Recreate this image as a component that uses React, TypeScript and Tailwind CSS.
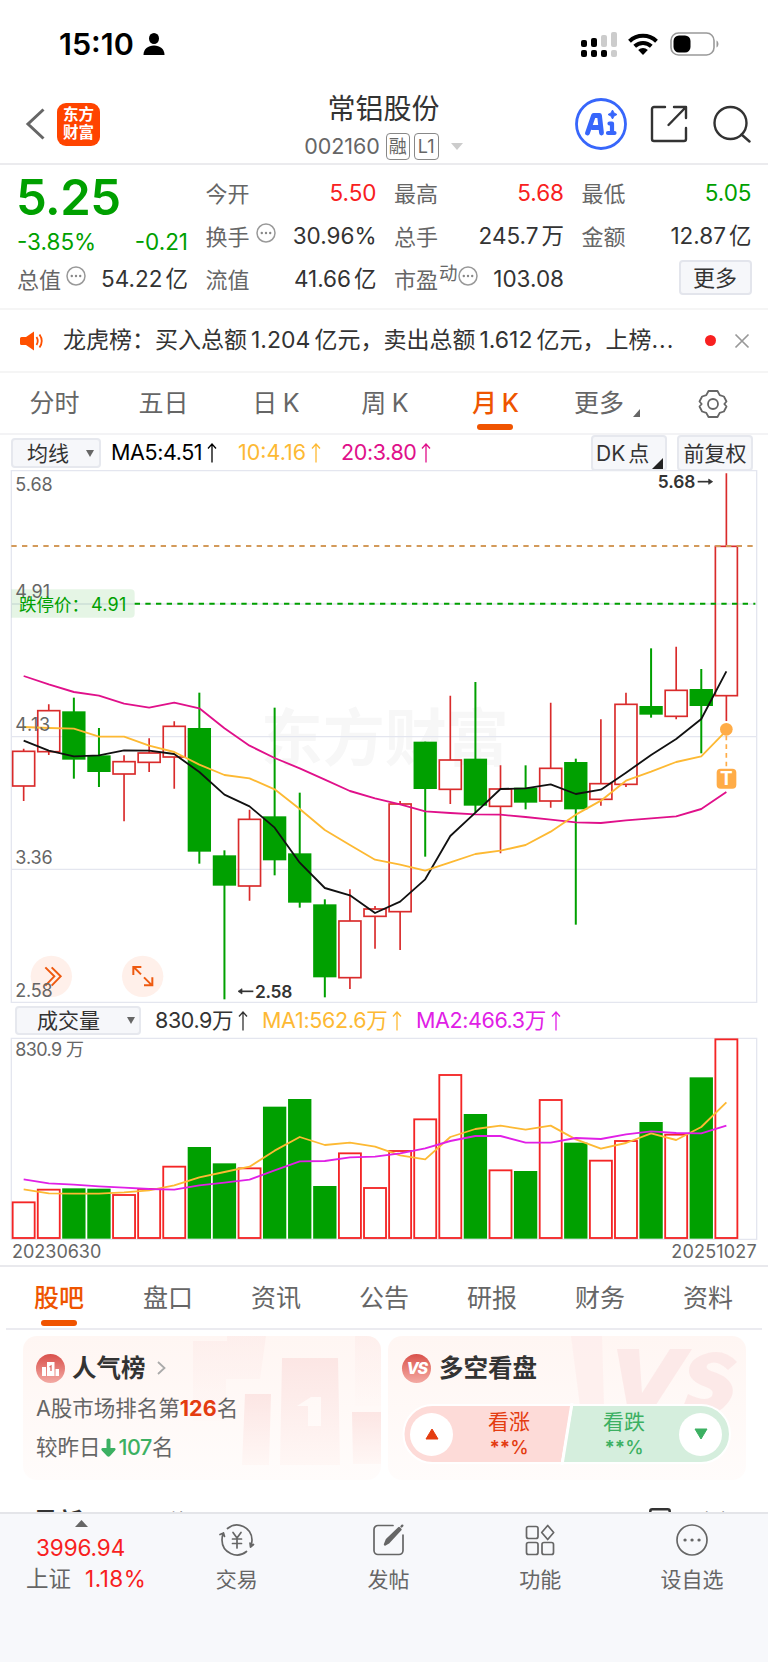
import type { ReactNode } from "react";

interface Candle {
  up: boolean;
  top: number;
  bottom: number;
  high: number;
  low: number;
  vol: number;
}

const c = (
  up: boolean,
  top: number,
  bottom: number,
  high: number,
  low: number,
  vol: number,
): Candle => ({ up, top, bottom, high, low, vol });

// chart units are thirds of a pixel
const CANDLES: Candle[] = [
  c(true, 844, 948, 836, 993, 547),
  c(true, 722, 845, 703, 855, 509),
  c(false, 724, 869, 683, 926, 505),
  c(false, 856, 906, 774, 951, 506),
  c(true, 875, 912, 856, 1054, 525),
  c(true, 849, 877, 805, 906, 507),
  c(true, 769, 861, 754, 956, 440),
  c(false, 774, 1145, 668, 1181, 381),
  c(false, 1156, 1247, 1141, 1588, 430),
  c(true, 1048, 1248, 1019, 1292, 445),
  c(false, 1039, 1171, 713, 1216, 260),
  c(false, 1150, 1298, 968, 1313, 237),
  c(false, 1303, 1522, 1288, 1582, 498),
  c(true, 1353, 1523, 1258, 1557, 400),
  c(true, 1317, 1339, 1308, 1436, 504),
  c(true, 1002, 1325, 993, 1440, 393),
  c(false, 815, 957, 815, 1160, 298),
  c(true, 870, 958, 677, 1002, 165),
  c(false, 866, 1007, 636, 1027, 282),
  c(true, 957, 1009, 886, 1150, 451),
  c(false, 953, 998, 886, 1018, 453),
  c(true, 895, 993, 698, 1013, 240),
  c(false, 876, 1018, 866, 1364, 368),
  c(true, 941, 988, 748, 1007, 422),
  c(true, 703, 943, 668, 951, 363),
  c(false, 708, 734, 535, 743, 306),
  c(true, 661, 739, 530, 748, 344),
  c(false, 657, 708, 597, 850, 172),
  c(true, 229, 677, 10, 753, 58),
];

// the volume bar of this month is red although its candle body is green
const VOL_UP = CANDLES.map((k, i) => k.up || i === 16);

const MA5 = [
  812, 842, 859, 856, 841, 842, 852, 906, 974, 1009, 1073, 1178, 1254, 1276, 1329, 1295, 1228, 1098,
  1028, 957, 955, 943, 972, 959, 908, 855, 807, 747, 604,
];
const MA10 = [
  771, 774, 776, 800, 800, 827, 846, 884, 915, 925, 958, 1017, 1080, 1125, 1169, 1184, 1202, 1177,
  1152, 1142, 1125, 1085, 1034, 992, 932, 905, 876, 859, 782,
];
const MA20 = [
  618, 643, 666, 677, 701, 713, 698, 715, 775, 827, 864, 895, 929, 963, 985, 1003, 1024, 1029, 1033,
  1034, 1041, 1049, 1057, 1059, 1051, 1045, 1039, 1017, 966,
];
const VMA1 = [
  508, 520, 521, 521, 517, 511, 496, 472, 456, 440, 392, 351, 375, 368, 380, 406, 418, 351, 327,
  317, 329, 317, 358, 386, 369, 340, 360, 321, 247,
];
const VMA2 = [
  478, 490, 494, 499, 503, 507, 509, 496, 488, 479, 451, 424, 423, 412, 410, 400, 385, 363, 348,
  348, 368, 368, 354, 357, 343, 334, 339, 340, 317,
];

const cx = (i: number) => 71 + i * 75.29;
const line = (ys: number[]) => ys.map((y, i) => `${cx(i).toFixed(1)},${y}`).join(" ");

function UpArrow() {
  return (
    <svg width="10" height="20" viewBox="0 0 10 20" fill="none" stroke="currentColor" strokeWidth="1.3" className="ml-[5px]">
      <path d="M5 19.5V1M1 5.5L5 1l4 4.5" />
    </svg>
  );
}

function Dots() {
  return (
    <svg width="20" height="20" viewBox="0 0 20 20" className="shrink-0">
      <circle cx="10" cy="10" r="9" fill="none" stroke="#999" strokeWidth="1.5" />
      <circle cx="5.8" cy="10" r="1.2" fill="#888" />
      <circle cx="10" cy="10" r="1.2" fill="#888" />
      <circle cx="14.2" cy="10" r="1.2" fill="#888" />
    </svg>
  );
}

function StatusBar() {
  return (
    <div className="flex h-[88px] items-center pl-[59px] pr-[49px]">
      <span className="w-[75px] whitespace-nowrap text-[30.5px] font-semibold leading-none text-black">15:10</span>
      <svg width="22" height="22" viewBox="0 0 22 22" className="ml-[9px]">
        <ellipse cx="11" cy="5.5" rx="5" ry="5.5" />
        <path d="M.5 22c0-6 4.500-9.500 10.500-9.500S21.500 16 21.500 22z" />
      </svg>
      <svg width="36" height="25" viewBox="0 0 36 25" className="ml-auto">
        <rect x="0" y="8" width="6" height="7" rx="2" />
        <rect x="10" y="6" width="6" height="9" rx="2" />
        <rect x="20" y="3" width="6" height="12" rx="2" fill="#ccc" />
        <rect x="30" y="0" width="6" height="15" rx="2" fill="#ccc" />
        <rect x="0" y="18" width="6" height="7" rx="2" />
        <rect x="10" y="18" width="6" height="7" rx="2" />
        <rect x="20" y="18" width="6" height="7" rx="2" />
        <rect x="30" y="18" width="6" height="7" rx="2" fill="#ccc" />
      </svg>
      <svg width="30" height="22" viewBox="0 0 30 22" className="ml-[11px]" fill="none" stroke="#000" strokeWidth="4">
        <path d="M1.500 8.200a19.500 19.500 0 0 1 27 0" />
        <path d="M6.700 13.200a12.200 12.200 0 0 1 16.600 0" />
        <path d="M15 22l-4.800-5a7 7 0 0 1 9.600 0z" fill="#000" stroke="none" />
      </svg>
      <svg width="49" height="24" viewBox="0 0 49 24" className="ml-[12px]">
        <rect x="1" y="1" width="43" height="22" rx="7.500" fill="none" stroke="#999" strokeWidth="1.600" />
        <rect x="3.500" y="3.500" width="17" height="17" rx="5.500" />
        <path d="M46.500 8.500c2.600 1.200 2.600 5.800 0 7z" fill="#999" />
      </svg>
    </div>
  );
}

function Header() {
  return (
    <header className="flex h-[77px] items-center border-b-2 border-[#ebebee] pb-[3px] pl-[25px] pr-[17px]">
      <div className="flex flex-1 items-center">
        <svg width="20" height="32" viewBox="0 0 20 32" fill="none" stroke="#666" strokeWidth="3">
          <path d="M18.500 1.500L3 16l15.500 14.500" />
        </svg>
        <div className="ml-[12px] flex h-[43px] w-[43px] flex-col items-center justify-center rounded-[9px] bg-[#ff4400] text-[15.500px] font-bold leading-[18px] text-white">
          <span>东方</span>
          <span>财富</span>
        </div>
      </div>
      <div className="mr-[9px] flex flex-col items-center pt-[4px]">
        <h1 className="text-[28px] leading-[34px] text-[#333]">常铝股份</h1>
        <div className="mt-[7px] flex items-center">
          <span className="text-[21.500px] leading-none tracking-[-0.1px] text-[#666]">002160</span>
          <span className="ml-[6px] flex h-[27px] w-[24px] items-center justify-center rounded-[4px] border border-[#888] text-[18px] leading-none text-[#666]">融</span>
          <span className="ml-[4px] flex h-[27px] w-[25px] items-center justify-center rounded-[4px] border border-[#888] text-[18px] leading-none text-[#666]">L1</span>
          <svg width="12" height="7" viewBox="0 0 12 7" className="ml-[12px]">
            <path d="M0 0h12L6 7z" fill="#ccc" />
          </svg>
        </div>
      </div>
      <div className="flex flex-1 items-center justify-end">
        <svg width="52" height="52" viewBox="0 0 52 52">
          <circle cx="26" cy="26" r="24.500" fill="none" stroke="#3766fb" strokeWidth="2.800" />
          <path d="M12.500 35l6-17.500h6l2 17.500M17 29.500h8" fill="none" stroke="#3766fb" strokeWidth="4.800" strokeLinejoin="round" strokeLinecap="round" />
          <path d="M34.500 25.500h2.500v9M33 35h6.500" fill="none" stroke="#3766fb" strokeWidth="4.200" strokeLinecap="round" strokeLinejoin="round" />
          <path d="M37.500 12l1.500 3 3 1.500-3 1.500-1.500 3-1.500-3-3-1.500 3-1.500z" fill="#3766fb" stroke="#3766fb" strokeLinejoin="round" />
        </svg>
        <svg width="38" height="38" viewBox="0 0 38 38" className="ml-[23px]" fill="none" stroke="#333" strokeWidth="2.400" strokeLinecap="round" strokeLinejoin="round">
          <path d="M15 2H4a2 2 0 0 0-2 2v30a2 2 0 0 0 2 2h30a2 2 0 0 0 2-2V23M24 2h12v11M36 2L18.500 20" />
        </svg>
        <svg width="38" height="38" viewBox="0 0 38 38" className="ml-[25px]" fill="none" stroke="#333" strokeWidth="2.400" strokeLinecap="round">
          <circle cx="17.500" cy="18" r="16" />
          <path d="M28.500 29.500l8 7" />
        </svg>
      </div>
    </header>
  );
}

interface StatProps {
  label: string;
  value: string;
  unit?: string;
  color?: string;
  extra?: ReactNode;
}

function Stat({ label, value, unit, color = "text-[#333]", extra }: StatProps) {
  return (
    <div className="flex h-[43px] items-center whitespace-nowrap">
      <span className="text-[22px] leading-none text-[#666]">{label}</span>
      {extra}
      <span className={`ml-auto text-[22.500px] leading-none ${color}`}>
        {value}
        {unit && <span className="ml-[3px]">{unit}</span>}
      </span>
    </div>
  );
}

function Quote() {
  return (
    <section className="grid h-[145px] grid-cols-[171px_171px_170px_170px] gap-x-[17.500px] border-b-2 border-[#f5f5f5] px-[17px] pt-[7px]">
      <div>
        <div className="-ml-px flex h-[50px] items-center text-[49px] font-semibold leading-none tracking-[-0.5px] text-[#00a000]">5.25</div>
        <div className="mt-[2px] flex h-[37px] items-center justify-between text-[22.500px] leading-none text-[#00a000]">
          <span>-3.85%</span>
          <span>-0.21</span>
        </div>
        <div className="-mt-[3px]">
          <Stat label="总值" value="54.22" unit="亿" extra={<span className="mb-[8px] ml-[5px]"><Dots /></span>} />
        </div>
      </div>
      <div>
        <Stat label="今开" value="5.50" color="text-[#f82020]" />
        <Stat label="换手" value="30.96%" extra={<span className="mb-[8px] ml-[6px]"><Dots /></span>} />
        <Stat label="流值" value="41.66" unit="亿" />
      </div>
      <div>
        <Stat label="最高" value="5.68" color="text-[#f82020]" />
        <Stat label="总手" value="245.7" unit="万" />
        <Stat
          label="市盈"
          value="103.08"
          extra={
            <span className="mb-[8px] flex items-center">
              <span className="mb-[5px] ml-px text-[18.500px] leading-none text-[#666]">动</span>
              <Dots />
            </span>
          }
        />
      </div>
      <div>
        <Stat label="最低" value="5.05" color="text-[#00a000]" />
        <Stat label="金额" value="12.87" unit="亿" />
        <button className="ml-auto mt-[2px] flex h-[35px] w-[73px] items-center justify-center rounded-[4px] border-2 border-[#e3e5ec] bg-[#f6f7fa] text-[22px] leading-none text-[#333]">更多</button>
      </div>
    </section>
  );
}

function News() {
  return (
    <section className="flex h-[63px] items-center border-b-2 border-[#f5f5f5] pl-[20px] pr-[18px]">
      <svg width="24" height="20" viewBox="0 0 24 20">
        <path d="M1.500 6H6l8-5.500v19L6 14H1.500Q0 14 0 12.500v-5Q0 6 1.500 6z" fill="#ff5000" />
        <path d="M16.500 6q2.500 4 0 8M19.500 3.500q4.500 6.500 0 13" fill="none" stroke="#ff5000" strokeWidth="1.800" />
      </svg>
      <p className="ml-[19px] w-[620px] whitespace-nowrap text-[23px] leading-none text-[#333]">龙虎榜：买入总额<span className="mx-[4px]">1.204</span>亿元，卖出总额<span className="mx-[4px]">1.612</span>亿元，上榜<span className="tracking-[1px]">...</span></p>
      <span className="ml-auto h-[11px] w-[11px] rounded-full bg-[#f82020]" />
      <svg width="16" height="16" viewBox="0 0 16 16" className="ml-[18px]" stroke="#999" strokeWidth="1.700">
        <path d="M1.500 1.500l13 13M14.500 1.500l-13 13" />
      </svg>
    </section>
  );
}

function PeriodTabs() {
  return (
    <nav className="flex h-[62px] items-center border-b-2 border-[#f3f3f5] pt-px text-[25px] leading-none text-[#666]">
      <span className="w-[109px] text-center">分时</span>
      <span className="w-[109px] text-center">五日</span>
      <span className="w-[115px] text-center tracking-[-0.8px]">日 K</span>
      <span className="w-[103px] text-center tracking-[-0.8px]">周 K</span>
      <span className="relative flex h-full w-[118px] items-center justify-center text-[#ee5500]">
        <span className="font-medium tracking-[-1px]">月 K</span>
        <i className="absolute bottom-[3px] h-[6px] w-[36px] rounded-[3px] bg-[#f05400]" />
      </span>
      <span className="ml-[20px]">更多</span>
      <svg width="7" height="8" viewBox="0 0 7 8" className="ml-[9px] mt-[18px]">
        <path d="M7 0v8H0z" fill="#666" />
      </svg>
      <svg width="30" height="30" viewBox="0 0 30 30" className="ml-[58px]" fill="none" stroke="#666" strokeWidth="1.800" strokeLinejoin="round">
        <path d="M10.500 2h9l2.200 4.200 4.200 1.300 2.600 5L26.300 15l2.200 2.500-2.600 5-4.200 1.300L19.500 28h-9l-2.200-4.200-4.200-1.300-2.600-5L3.700 15l-2.200-2.500 2.600-5 4.200-1.300z" />
        <circle cx="15" cy="15" r="5" />
      </svg>
    </nav>
  );
}

function Indicator({ text, color }: { text: string; color: string }) {
  return (
    <span className={`flex items-center text-[21.500px] leading-none ${color}`}>
      {text}
      <UpArrow />
    </span>
  );
}

function PriceHeader() {
  return (
    <div className="flex h-[36px] items-center pl-[11px] pr-[15px]">
      <button className="flex h-[30px] w-[90px] items-center rounded-[4px] border-2 border-[#e6e8ee] bg-[#f6f7fa] pl-[14px] text-[21px] leading-none text-[#333]">
        均线
        <svg width="8" height="7" viewBox="0 0 8 7" className="ml-[17px]">
          <path d="M0 0h8L4 7z" fill="#666" />
        </svg>
      </button>
      <div className="ml-[10px] w-[127px] tracking-[-0.4px]"><Indicator text="MA5:4.51" color="text-black" /></div>
      <div className="w-[103px]"><Indicator text="10:4.16" color="text-[#fdb933]" /></div>
      <div className="tracking-[-0.4px]"><Indicator text="20:3.80" color="text-[#e0108a]" /></div>
      <button className="relative ml-auto flex h-[36px] w-[76px] items-center rounded-[4px] border-2 border-[#e6e8ee] bg-[#f6f7fa] pl-[3px] text-[21px] leading-none text-[#333]">
        DK<span className="ml-[3px]">点</span>
        <svg width="11" height="11" viewBox="0 0 11 11" className="absolute bottom-0 right-[2px]">
          <path d="M11 0v11H0z" fill="#222" />
        </svg>
      </button>
      <button className="ml-[10px] flex h-[36px] w-[76px] items-center justify-center whitespace-nowrap rounded-[4px] border-2 border-[#e6e8ee] bg-[#f6f7fa] text-[21px] leading-none text-[#333]">前复权</button>
    </div>
  );
}

function PriceChart() {
  return (
    <svg className="block h-[534px] w-full" viewBox="0 0 2304 1602">
      <text x="782" y="872" fontSize="186" fontWeight="700" fill="#f7f7f7" textLength="744">东方财富</text>
      <g stroke="#e4e6ef" strokeWidth="4" fill="none">
        <path d="M34 2H2270V1597H34z" />
        <path d="M34 402H2270M34 800H2270M34 1198H2270" />
      </g>
      {CANDLES.map((k, i) => {
        const x = cx(i);
        return k.up ? (
          <g key={i} stroke="#d92b2b" strokeWidth="5" fill="none">
            <path d={`M${x} ${k.high}V${k.top}M${x} ${k.bottom}V${k.low}`} />
            <rect x={x - 33} y={k.top} width="66" height={k.bottom - k.top} />
          </g>
        ) : (
          <g key={i} fill="#00a000">
            <rect x={x - 3} y={k.high} width="6" height={k.low - k.high} />
            <rect x={x - 35} y={k.top} width="70" height={k.bottom - k.top} />
          </g>
        );
      })}
      <path d="M34 228H2270" stroke="#d39a5a" strokeWidth="6" strokeDasharray="16 16" />
      <path d="M404 401H2266" stroke="#00a000" strokeWidth="6" strokeDasharray="16 16" />
      <g fill="none" strokeWidth="5.5" strokeLinejoin="round">
        <polyline points={line(MA20)} stroke="#e0108a" />
        <polyline points={line(MA5)} stroke="#111" />
        <polyline points={line(MA10)} stroke="#fdb933" />
      </g>
      <circle cx="2179" cy="778" r="19" fill="#ffac47" />
      <path d="M2179 797V896" stroke="#ffac47" strokeWidth="5" strokeDasharray="14 12" />
      <rect x="2150" y="896" width="59" height="60" rx="12" fill="#ffac47" />
      <text x="2179" y="946" fontSize="57" fontWeight="700" fill="#fff" textAnchor="middle">T</text>
      <path d="M34 358H392q12 0 12 12v61q0 12-12 12H34z" fill="#00a000" fillOpacity=".1" />
      <circle cx="154" cy="1519" r="62" fill="#fff0ea" />
      <circle cx="428" cy="1519" r="62" fill="#fff0ea" />
      <g fill="none" stroke="#ee5a10" strokeWidth="6">
        <path d="M136 1492l27 27-27 28M155 1492l27 27-27 28" />
        <path d="M424 1491h-24v24M401 1491l22 22M432 1546h25v-24M456 1546l-24-24" />
      </g>
      <g fontSize="54" fill="#666">
        <text x="46" y="62" textLength="112">5.68</text>
        <text x="46" y="384" textLength="104">4.91</text>
        <text x="46" y="782" textLength="104">4.13</text>
        <text x="46" y="1182" textLength="112">3.36</text>
        <text x="46" y="1580" textLength="112">2.58</text>
      </g>
      <text x="57" y="423" fontSize="52.500" fill="#00a000">跌停价：</text>
      <text x="273" y="422" fontSize="54" fill="#00a000" textLength="106">4.91</text>
      <g fontSize="52" fontWeight="600" fill="#333">
        <text x="1973" y="55" textLength="113">5.68</text>
        <text x="765" y="1585" textLength="112">2.58</text>
      </g>
      <g stroke="#333" strokeWidth="5" fill="#333">
        <path d="M2093 35H2132" />
        <path d="M2126 27l12 8-12 8z" strokeWidth="2" />
        <path d="M760 1564H720" />
        <path d="M726 1556l-12 8 12 8z" strokeWidth="2" />
      </g>
    </svg>
  );
}

function VolumeHeader() {
  return (
    <div className="flex h-[33px] items-center pl-[15px]">
      <button className="flex h-[29px] w-[126px] items-center rounded-[4px] border-2 border-[#e6e8ee] bg-[#f6f7fa] pl-[20px] text-[21px] leading-none text-[#333]">
        成交量
        <svg width="8" height="7" viewBox="0 0 8 7" className="ml-[27px]">
          <path d="M0 0h8L4 7z" fill="#666" />
        </svg>
      </button>
      <div className="ml-[14px] w-[107px] tracking-[-0.4px]"><Indicator text="830.9万" color="text-[#333]" /></div>
      <div className="w-[154px] tracking-[-0.3px]"><Indicator text="MA1:562.6万" color="text-[#fdb933]" /></div>
      <div className="tracking-[-0.4px]"><Indicator text="MA2:466.3万" color="text-[#e020e6]" /></div>
    </div>
  );
}

function VolumeChart() {
  return (
    <div className="h-[230px] border-b-2 border-[#e9e9ed]">
      <svg className="block h-[228px] w-full" viewBox="0 51 2304 684">
        <path d="M34 55H2270V658H34z" fill="none" stroke="#e4e6ef" strokeWidth="4" />
        {CANDLES.map((k, i) =>
          VOL_UP[i] ? (
            <rect key={i} x={cx(i) - 33} y={k.vol} width="66" height={654 - k.vol} fill="none" stroke="#f42525" strokeWidth="5.5" />
          ) : (
            <rect key={i} x={cx(i) - 35} y={k.vol} width="70" height={656 - k.vol} fill="#00a000" />
          ),
        )}
        <g fill="none" strokeWidth="5.5" strokeLinejoin="round">
          <polyline points={line(VMA1)} stroke="#fdb933" />
          <polyline points={line(VMA2)} stroke="#e020e6" />
        </g>
        <g fontSize="54" fill="#666">
          <text x="46" y="108" textLength="206">830.9 万</text>
          <text x="36" y="714" textLength="268">20230630</text>
          <text x="2014" y="714" textLength="256">20251027</text>
        </g>
      </svg>
    </div>
  );
}

const SECTIONS = ["股吧", "盘口", "资讯", "公告", "研报", "财务", "资料"];

function SectionTabs() {
  return (
    <nav className="mx-[6px] flex h-[63px] border-b-2 border-[#ebebf0] text-[25px] leading-none text-[#666]">
      {SECTIONS.map((s, i) => (
        <span
          key={s}
          className={`relative flex h-full w-[108.200px] items-center justify-center ${i === 0 ? "pr-[2px] font-medium text-[#ee5500]" : ""}`}
        >
          <span className="pt-[2px]">{s}</span>
          {i === 0 && <i className="absolute bottom-[2px] h-[6px] w-[36px] rounded-[3px] bg-[#f05400]" />}
        </span>
      ))}
    </nav>
  );
}

function RankCard() {
  return (
    <div className="relative h-[144px] w-[358px] overflow-hidden rounded-[14px] bg-gradient-to-b from-[#fff6f3] to-[#fffcfb] pl-[13px] pt-[17px]">
      <svg width="358" height="144" viewBox="0 0 358 144" className="absolute left-0 top-0">
        <defs>
          <linearGradient id="rank" x1="0" y1="0" x2="0" y2="1">
            <stop offset="0" stopColor="#fce6e4" />
            <stop offset="1" stopColor="#fff7f5" />
          </linearGradient>
        </defs>
        <path d="M170 5h34V0h39l-6 43h-34v42h-33z" fill="url(#rank)" opacity=".45" />
        <path d="M332 0h26v70h-26z" fill="url(#rank)" opacity=".4" />
        <path d="M222 58h26l-2 71h-27z" fill="url(#rank)" />
        <path d="M259 22h56l2 107h-60zM274 70l14-9h10v29h-13V70z" fill="url(#rank)" fillRule="evenodd" />
        <path d="M329 76h29v52h-28z" fill="url(#rank)" />
      </svg>
      <div className="relative flex h-[30px] items-center">
        <svg width="29" height="29" viewBox="0 0 29 29">
          <defs>
            <linearGradient id="badge" x1="0" y1="0" x2="0" y2="1">
              <stop offset="0" stopColor="#d9504b" />
              <stop offset="1" stopColor="#f3aaa4" />
            </linearGradient>
          </defs>
          <circle cx="14.500" cy="14.500" r="14.500" fill="url(#badge)" />
          <path d="M6 13h4v9H6zM11 8h7.500v14H11zM19.500 15h3.500v7h-3.500z" fill="#fff" />
          <path d="M13.500 13l1.500-1v5" stroke="#df6a64" strokeWidth="1.300" fill="none" />
        </svg>
        <h2 className="ml-[7px] text-[24.500px] font-bold leading-none text-[#333]">人气榜</h2>
        <svg width="9" height="14" viewBox="0 0 9 14" className="ml-[11px]" fill="none" stroke="#aaa" strokeWidth="1.800">
          <path d="M1 1l6.500 6L1 13" />
        </svg>
      </div>
      <p className="relative mt-[14px] text-[21.500px] leading-[22px] text-[#666]">
        A股市场排名第<b className="font-bold text-[#e43c10]">126</b>名
      </p>
      <p className="relative mt-[17px] flex items-center text-[21.500px] leading-[22px] text-[#666]">
        较昨日
        <svg width="15" height="19" viewBox="0 0 15 19" fill="#3cb062">
          <path d="M5.500 1.500q2-2 4 0V10h4q2 .5.500 2.500L9 18q-1.500 1.500-3 0L.8 12.500Q-.5 10.500 1.500 10h4z" />
        </svg>
        <span className="ml-[3px] font-medium tracking-[-0.4px] text-[#3cb062]">107</span>名
      </p>
    </div>
  );
}

function VoteCard() {
  return (
    <div className="relative h-[144px] w-[358px] overflow-hidden rounded-[14px] bg-gradient-to-b from-[#fff6f3] to-[#fffcfb] pl-[14px] pt-[17px]">
      <svg width="358" height="144" viewBox="0 0 358 144" className="absolute left-0 top-0">
        <path d="M183 0h31l2 70h-24z" fill="#fdeceb" opacity=".7" />
        <path d="M229 13h22l3 44 28-44h22l-40 62h-24zM349 26q-12-13-29-9-19 5-19 18 0 10 17 16 9 3 6 9-6 7-24-2l-5 13q24 14 40 1 16-15 6-27-5-6-18-10-7-3-3-7 9-5 20 6z" fill="#fce6e5" opacity=".85" />
        <path d="M15.500 98a29 29 0 0 1 29-29H184L174 127H44.500A29 29 0 0 1 15.500 98z" fill="#fddbd8" stroke="#fff" strokeWidth="2" />
        <path d="M184 69H313a29 29 0 0 1 0 58H174z" fill="#d5eedd" stroke="#fff" strokeWidth="2" />
        <path d="M184 67L174 129" stroke="#fff" strokeWidth="3" />
      </svg>
      <div className="relative flex h-[30px] items-center">
        <span className="flex h-[29px] w-[29px] items-center justify-center rounded-full bg-gradient-to-b from-[#d9504b] to-[#f3aaa4] text-[16px] font-extrabold italic leading-none tracking-[-1.500px] text-white">VS</span>
        <h2 className="ml-[8px] text-[24.500px] font-bold leading-none text-[#333]">多空看盘</h2>
      </div>
      <div className="relative mr-[16px] mt-[22px] flex h-[58px] items-center px-[8px]">
        <span className="flex h-[43px] w-[43px] items-center justify-center rounded-full bg-white">
          <svg width="14" height="12" viewBox="0 0 14 12">
            <path d="M7 1l6 10H1z" fill="#e43c10" stroke="#e43c10" strokeLinejoin="round" />
          </svg>
        </span>
        <span className="ml-[35px] flex flex-col items-center text-[#e43c10]">
          <span className="text-[21px] leading-[26px]">看涨</span>
          <span className="text-[18.500px] font-medium leading-[24px]"><span className="font-bold">**</span>%</span>
        </span>
        <span className="ml-auto mr-[34px] flex flex-col items-center text-[#3cb062]">
          <span className="text-[21px] leading-[26px]">看跌</span>
          <span className="text-[18.500px] font-medium leading-[24px]"><span className="font-bold">**</span>%</span>
        </span>
        <span className="flex h-[43px] w-[43px] items-center justify-center rounded-full bg-white">
          <svg width="14" height="12" viewBox="0 0 14 12">
            <path d="M7 11l6-10H1z" fill="#3cb062" stroke="#3cb062" strokeLinejoin="round" />
          </svg>
        </span>
      </div>
    </div>
  );
}

function TabItem({ label, children }: { label: string; children: ReactNode }) {
  return (
    <div className="flex w-[151.700px] flex-col items-center pt-[9px]">
      <svg width="36" height="34" viewBox="0 0 36 34" fill="none" stroke="#666" strokeWidth="1.700" strokeLinecap="round" strokeLinejoin="round">
        {children}
      </svg>
      <span className="mt-[12px] text-[21px] leading-none text-[#666]">{label}</span>
    </div>
  );
}

function BottomBar() {
  return (
    <footer className="flex h-[150px] border-t-2 border-[#e4e5e9] bg-[#f7f8fb]">
      <div className="flex w-[161px] flex-col pt-[6px]">
        <svg width="13" height="7" viewBox="0 0 13 7" className="ml-[75px]">
          <path d="M6.500 0L13 7H0z" fill="#666" />
        </svg>
        <span className="ml-[36px] mt-[10px] text-[22.500px] leading-none tracking-[-0.1px] text-[#f82020]">3996.94</span>
        <div className="ml-[26px] mt-[8px] flex items-center text-[22.500px] leading-none">
          <span className="text-[#666]">上证</span>
          <span className="ml-[14px] tracking-[0.5px] text-[#f82020]">1.18%</span>
        </div>
      </div>
      <TabItem label="交易">
        <path d="M8.500 5.500A15 15 0 0 1 33 17q0 4-1.500 7M31.500 24l3-2.500M31.500 24l-.5-4M27.500 28.500A15 15 0 0 1 3 17q0-4 1.500-7M1 11.500L4.500 10l1 3.500" />
        <path d="M14 9.500l4 5.500 4-5.500M18 15v10M13.500 16h9M13.500 20.500h9" />
      </TabItem>
      <TabItem label="发帖">
        <path d="M22 2.500H7a4 4 0 0 0-4 4v21a4 4 0 0 0 4 4h21a4 4 0 0 0 4-4V12" />
        <path d="M14 21.500l2-5L28 5l1.500 1.500-12 13zM30.500 3.500l.8-.8" fill="#666" strokeWidth="2.400" />
      </TabItem>
      <TabItem label="功能">
        <rect x="4.500" y="3.500" width="11.500" height="12" rx="2" />
        <rect x="4.500" y="19.500" width="11.500" height="12" rx="2" />
        <rect x="20" y="19.500" width="11.500" height="12" rx="2" />
        <path d="M25.700 2.500l6 7-6 7-6-7z" />
      </TabItem>
      <TabItem label="设自选">
        <circle cx="18" cy="17" r="15" />
        <path d="M11 17h.1M18 17h.1M25 17h.1" strokeWidth="3.200" />
      </TabItem>
    </footer>
  );
}

export default function App() {
  return (
    <div className="flex h-[1662px] w-[768px] flex-col overflow-hidden bg-white font-['Inter','Noto_Sans_CJK_SC',sans-serif]">
      <StatusBar />
      <Header />
      <Quote />
      <News />
      <PeriodTabs />
      <PriceHeader />
      <div className="-mt-px">
        <PriceChart />
      </div>
      <VolumeHeader />
      <VolumeChart />
      <SectionTabs />
      <div className="flex gap-[7px] pl-[23px] pt-[6px]">
        <RankCard />
        <VoteCard />
      </div>
      {/* feed filter, mostly hidden by the bottom bar */}
      <div className="flex h-[32px] items-start overflow-hidden pl-[33px] pr-[30px] pt-[28px] text-[25px] leading-[28px]">
        <span className="font-bold text-[#333]">最新</span>
        <span className="ml-[63px] text-[22px] text-[#666]">最热</span>
        <svg width="22" height="22" viewBox="0 0 22 22" className="ml-auto shrink-0" fill="none" stroke="#333" strokeWidth="2.500">
          <rect x="1.300" y="1.300" width="19.400" height="19.400" rx="2" />
        </svg>
        <span className="ml-[25px] text-[21px] text-[#666]">全部</span>
      </div>
      <BottomBar />
    </div>
  );
}
